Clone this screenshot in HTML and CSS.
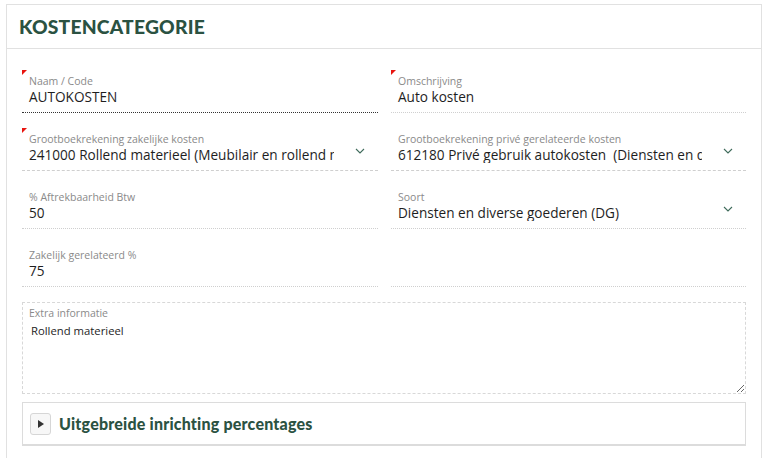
FILE: index.html
```html
<!DOCTYPE html>
<html lang="nl">
<head>
<meta charset="utf-8">
<title>Kostencategorie</title>
<link rel="stylesheet" href="styles.css">
</head>
<body>
<section class="card">
  <header class="card-header">
    <h1 class="card-title">KOSTENCATEGORIE</h1>
  </header>
  <div class="card-body">
    <div class="grid">
      <div class="field required focused">
        <div class="field-label">Naam / Code</div>
        <div class="field-value">AUTOKOSTEN</div>
      </div>
      <div class="field required">
        <div class="field-label">Omschrijving</div>
        <div class="field-value">Auto kosten</div>
      </div>
      <div class="field required select">
        <div class="field-label">Grootboekrekening zakelijke kosten</div>
        <div class="select-row">
          <div class="field-value clip">241000 Rollend materieel (Meubilair en rollend materieel)</div>
          <svg class="chevron" width="10" height="6" viewBox="0 0 10 6"><path d="M1 1l4 4 4-4" fill="none" stroke="#3f6b5b" stroke-width="1.1"/></svg>
        </div>
      </div>
      <div class="field select">
        <div class="field-label">Grootboekrekening privé gerelateerde kosten</div>
        <div class="select-row">
          <div class="field-value clip">612180 Privé gebruik autokosten &nbsp;(Diensten en diverse goederen)</div>
          <svg class="chevron" width="10" height="6" viewBox="0 0 10 6"><path d="M1 1l4 4 4-4" fill="none" stroke="#3f6b5b" stroke-width="1.1"/></svg>
        </div>
      </div>
      <div class="field">
        <div class="field-label">% Aftrekbaarheid Btw</div>
        <div class="field-value">50</div>
      </div>
      <div class="field select-dotted">
        <div class="field-label">Soort</div>
        <div class="select-row">
          <div class="field-value clip">Diensten en diverse goederen (DG)</div>
          <svg class="chevron" width="10" height="6" viewBox="0 0 10 6"><path d="M1 1l4 4 4-4" fill="none" stroke="#3f6b5b" stroke-width="1.1"/></svg>
        </div>
      </div>
      <div class="field">
        <div class="field-label">Zakelijk gerelateerd %</div>
        <div class="field-value">75</div>
      </div>
      <div class="field empty"></div>
    </div>

    <div class="textarea-wrap">
      <label class="textarea-label" for="extra">Extra informatie</label>
      <textarea id="extra" class="textarea">Rollend materieel</textarea>
    </div>

    <div class="panel">
      <button class="panel-toggle" type="button" aria-label="Uitklappen">
        <svg width="6" height="8" viewBox="0 0 6 8"><path d="M0 0l6 4-6 4z" fill="#333"/></svg>
      </button>
      <span class="panel-title">Uitgebreide inrichting percentages</span>
    </div>
  </div>
</section>
</body>
</html>
```

FILE: styles.css
```css
* { box-sizing: border-box; }

body {
  margin: 0;
  background: #fff;
  font-family: "Open Sans", "Liberation Sans", sans-serif;
  color: #222;
}

.card {
  margin: 4px 5px 0 6px;
  border: 1px solid #e1e1e1;
  border-bottom: none;
  background: #fff;
}

.card-header {
  height: 44px;
  border-bottom: 1px solid #e1e1e1;
  display: flex;
  align-items: center;
  padding-left: 12px;
}

.card-title {
  margin: 0;
  font-family: Lato, "Open Sans", sans-serif;
  font-weight: 900;
  font-size: 19.3px;
  letter-spacing: 0.2px;
  color: #2b5242;
}

.card-body {
  padding: 21px 15px 20px 15px;
}

.grid {
  display: grid;
  grid-template-columns: 356px 355px;
  column-gap: 13px;
  row-gap: 15px;
}

.field {
  position: relative;
  height: 43px;
  padding: 5px 7px 0 7px;
  border-bottom: 1px dotted #cfcfcf;
}

.field.focused { border-bottom: 1px dotted #333; }
.field.select { border-bottom: 1px dashed #cfcfcf; }

.field.required::before {
  content: "";
  position: absolute;
  left: 0;
  top: 0;
  border-top: 5px solid #e8140f;
  border-right: 5px solid transparent;
}

.field-label {
  font-size: 10.5px;
  line-height: 13px;
  color: #8a8a8a;
  white-space: nowrap;
}

.field-value {
  font-size: 13.6px;
  line-height: 17px;
  color: #1e1e1e;
  white-space: nowrap;
}

.select-row {
  display: flex;
  align-items: center;
}

.clip {
  overflow: hidden;
  text-overflow: clip;
  width: 305px;
}

.field:nth-child(even) .clip { width: 304px; }

.chevron {
  margin-left: 21px;
  margin-top: -8px;
  flex: none;
}

.textarea-wrap {
  position: relative;
  margin-top: 15px;
}

.textarea-label {
  position: absolute;
  left: 7px;
  top: 5px;
  font-size: 10.5px;
  line-height: 13px;
  color: #8a8a8a;
}

.textarea {
  display: block;
  width: 100%;
  height: 92px;
  border: 1px dashed #d8d8d8;
  padding: 20px 8px 4px 8px;
  font-family: inherit;
  font-size: 11.3px;
  line-height: 16px;
  color: #1e1e1e;
  resize: vertical;
  outline: none;
  background: #fff;
}

.panel {
  margin-top: 8px;
  height: 44px;
  border: 1px solid #dcdcdc;
  border-bottom-width: 2px;
  display: flex;
  align-items: center;
  padding-left: 7px;
}

.panel-toggle {
  width: 21px;
  height: 22px;
  padding: 0;
  border: 1px solid #d6d6d6;
  border-radius: 3px;
  background: #f7f7f7;
  display: flex;
  align-items: center;
  justify-content: center;
  margin-right: 8px;
}

.panel-title {
  font-family: Lato, "Open Sans", sans-serif;
  font-weight: 900;
  font-size: 16px;
  color: #2b5242;
  letter-spacing: 0.2px;
}
```
